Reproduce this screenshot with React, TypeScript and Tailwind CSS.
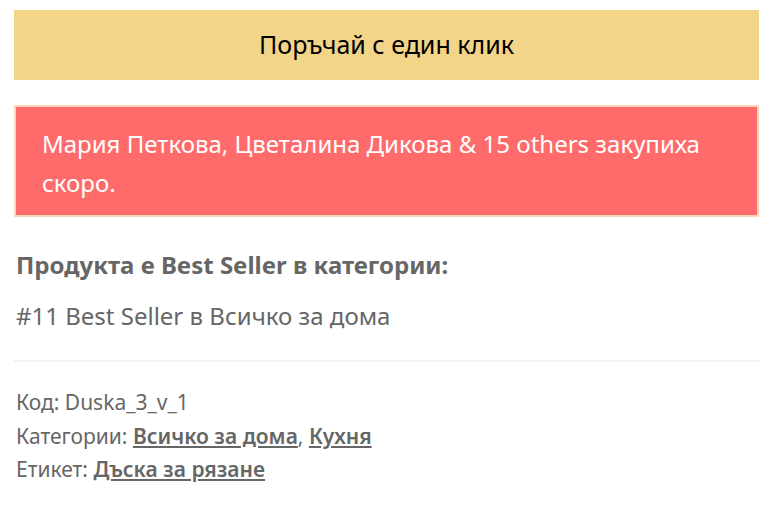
export default function App() {
  const font = { fontFamily: '"Noto Sans", "Open Sans", sans-serif' };
  return (
    <div className="w-[770px] h-[512px] bg-white overflow-hidden" style={font}>
      <div className="ml-[14px] w-[745px] pt-[10px]">
        <button className="w-full h-[70px] bg-[#f2d589] text-black text-[25px] flex items-center justify-center">
          Поръчай с един клик
        </button>
        <div className="mt-[25px] border-2 border-[#fbd5b8] bg-[#ff6b6b] text-white text-[24px] leading-[39px] pl-[26px] pr-[20px] pt-[17px] pb-[13px]">
          Мария Петкова, Цветалина Дикова &amp; 15 others закупиха скоро.
        </div>
        <div className="px-[2px] text-[#666]">
          <h3 className="mt-[34px] text-[24px] font-bold leading-[28px]">Продукта е Best Seller в категории:</h3>
          <p className="mt-[21px] text-[24px] leading-[32px]">#11 Best Seller в Всичко за дома</p>
        </div>
        <hr className="mt-[28px] border-0 border-t-2 border-[#f3f3f3]" />
        <div className="mt-[24px] px-[2px] text-[#666] text-[21px] leading-[33.5px]">
          <div>Код: Duska_3_v_1</div>
          <div>
            Категории:{" "}
            <a href="#" className="font-semibold underline underline-offset-2">Всичко за дома</a>,{" "}
            <a href="#" className="font-semibold underline underline-offset-2">Кухня</a>
          </div>
          <div>
            Етикет: <a href="#" className="font-semibold underline underline-offset-2">Дъска за рязане</a>
          </div>
        </div>
      </div>
    </div>
  );
}
